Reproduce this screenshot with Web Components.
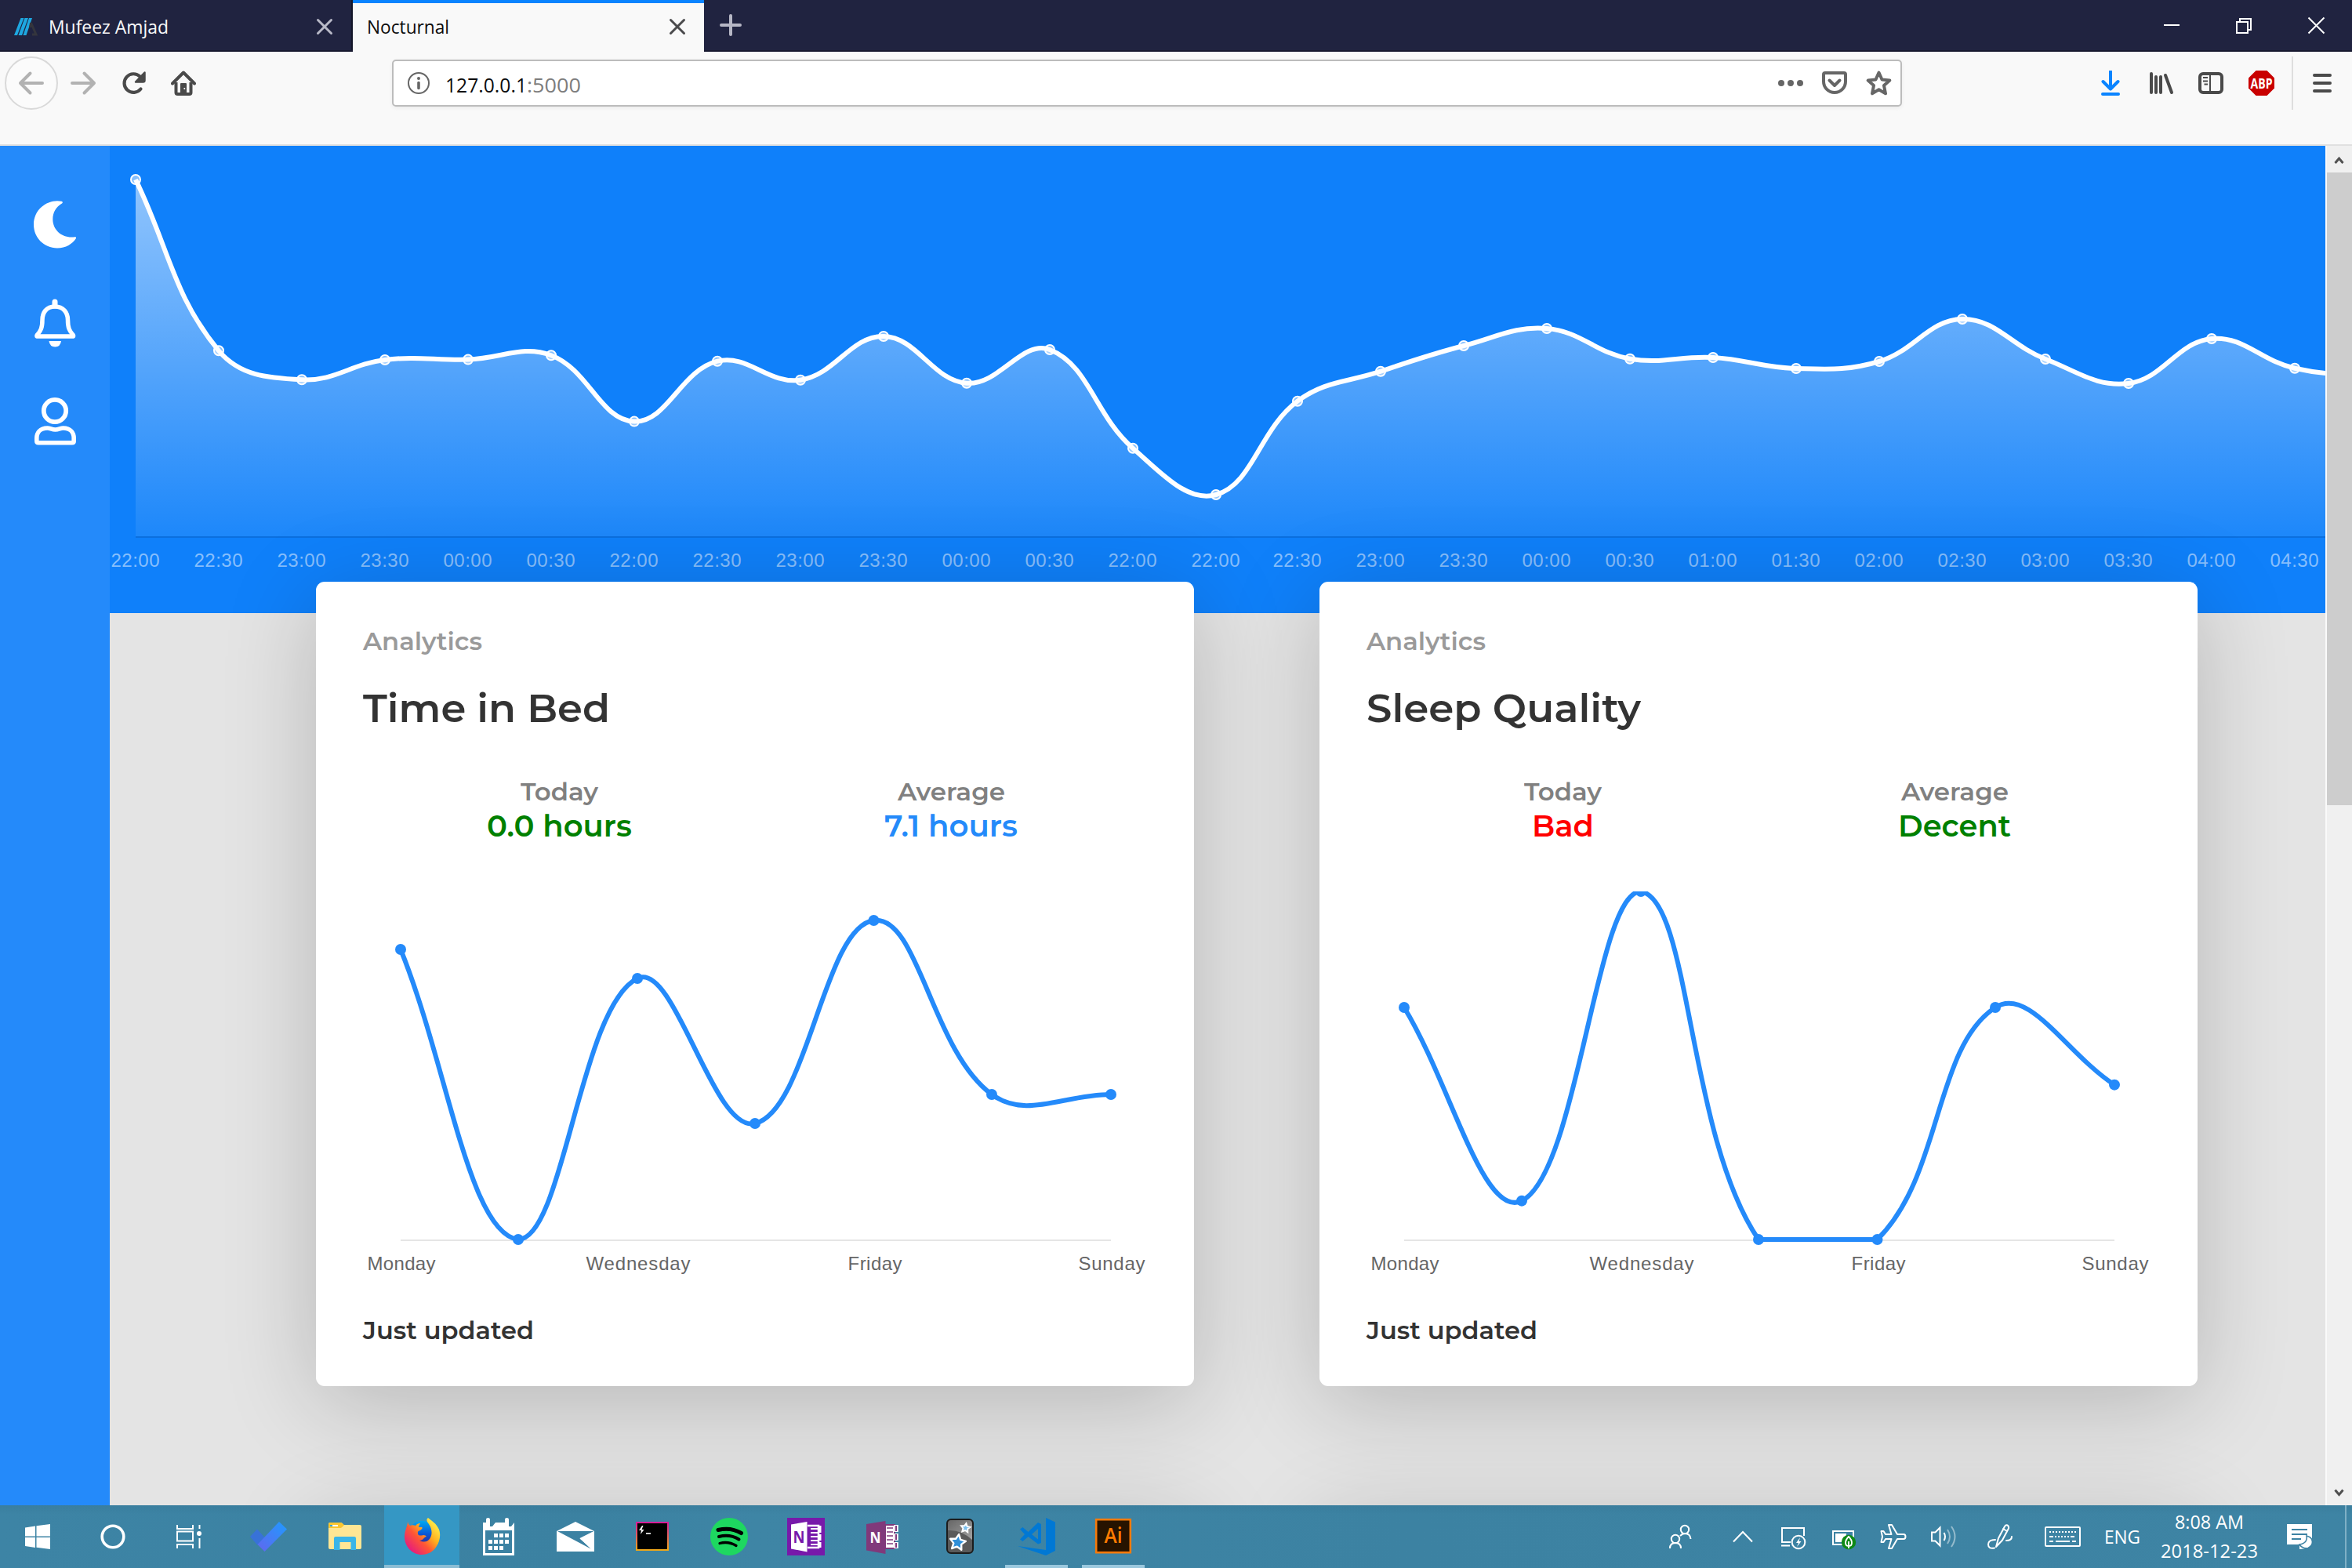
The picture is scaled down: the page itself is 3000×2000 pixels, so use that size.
<!DOCTYPE html>
<html lang="en">
<head>
<meta charset="utf-8">
<title>Nocturnal</title>
<style>
html,body{margin:0;padding:0;width:3000px;height:2000px;overflow:hidden}
body{display:flex;flex-direction:column;font-family:"Open Sans","Noto Sans",sans-serif;background:#e4e4e4}
</style>
</head>
<body>
<tab-strip></tab-strip>
<nav-bar></nav-bar>
<page-view>
  <side-nav slot="side"></side-nav>
  <wave-chart slot="hero"></wave-chart>
  <stat-card slot="cards" heading="Time in Bed" heading-w="315" today="0.0 hours" today-w="185" today-color="#008000" average="7.1 hours" average-w="170" average-color="#248afa" values="10,0,9,4,11,5,5" max="12"></stat-card>
  <stat-card slot="cards" heading="Sleep Quality" heading-w="350" today="Bad" today-w="79" today-color="#ff0000" average="Decent" average-w="144" average-color="#008000" values="6,1,9,0,0,6,4" max="9"></stat-card>
  <stat-card slot="cards" blank></stat-card>
  <stat-card slot="cards" blank></stat-card>
</page-view>
<task-bar></task-bar>

<script>
/* Inline SVG whose user units are window pixels. */
const ic = (x, y, w, h, body, ml = 0) =>
  `<svg width="${w}" height="${h}" viewBox="${x} ${y} ${w} ${h}" style="margin-left:${ml}px;flex:none;display:block" fill="none">${body}</svg>`;

/* Cubic spline through the points, control points capped to the plot area. */
function spline(pts, top, bottom, tension = 0.4) {
  const cap = v => Math.max(top, Math.min(bottom, v));
  const c = pts.map((p, i) => {
    const a = pts[i - 1] || p, b = pts[i + 1] || p;
    const d0 = Math.hypot(p[0] - a[0], p[1] - a[1]), d1 = Math.hypot(b[0] - p[0], b[1] - p[1]);
    const f0 = tension * d0 / (d0 + d1), f1 = tension * d1 / (d0 + d1);
    return [p[0] - f0 * (b[0] - a[0]), cap(p[1] - f0 * (b[1] - a[1])), p[0] + f1 * (b[0] - a[0]), cap(p[1] + f1 * (b[1] - a[1]))];
  });
  let d = `M${pts[0]}`;
  for (let i = 1; i < pts.length; i++) d += `C${c[i-1][2]} ${c[i-1][3]} ${c[i][0]} ${c[i][1]} ${pts[i]}`;
  return d;
}

class Base extends HTMLElement {
  connectedCallback() {
    if (this.shadowRoot) return;
    this.attachShadow({ mode: 'open' }).innerHTML = this.render();
  }
}

/* Text condensed or widened to a given width. */
customElements.define('fit-text', class extends HTMLElement {
  connectedCallback() {
    if (this.shadowRoot) return;
    const w = +this.getAttribute('w');
    this.attachShadow({ mode: 'open' }).innerHTML = `<style>:host{display:block;width:${w}px;white-space:nowrap;flex:none}span{display:inline-block;transform-origin:0 50%}</style><span><slot></slot></span>`;
    const s = this.shadowRoot.querySelector('span');
    const n = s.getBoundingClientRect().width;
    if (n) s.style.transform = `scaleX(${w / n})`;
  }
});

customElements.define('tab-strip', class extends Base {
  render() {
    const x = (cx, col) => ic(cx - 12, 22, 24, 24, `<path d="M${cx-8.5} 25.5l17 17M${cx+8.5} 25.5l-17 17" stroke="${col}" stroke-width="3" stroke-linecap="round"/>`);
    return `<style>
:host{display:flex;height:64px;background:#202340;border-bottom:2px solid #181a30;flex:none;font-size:24px;line-height:34px}
.tab{box-sizing:border-box;display:flex;align-items:flex-start;padding-top:22px;height:64px}
.tab fit-text{margin-top:-5px}
.one{width:450px;padding-left:18px;color:#f9f9fa;border-right:2px solid #14162a}
.two{width:448px;height:66px;padding:18px 0 0 18px;background:#f9f9f9;border-top:4px solid #0a84ff;color:#0c0c0d}
.grow{flex:1}
.pad{width:22px;flex:none}
.new{padding-top:16px;padding-left:18px}
.win{padding-top:20px;display:flex}
</style>
<div class="tab one">${ic(18,22,32,24,`<path d="M26.5 23h4L22 45h-4zM31.500 23h4.500L28 45h-4.500zM37 23h4L33.500 45h-4z" fill="#1ea7e0"/><path d="M39.500 29l6.500 15h-5M39.500 29l-1 6" stroke="#34353d" stroke-width="3"/>`)}<fit-text w="153" style="margin-left:12px">Mufeez Amjad</fit-text><div class="grow"></div>${x(414,'#b9bac8')}<div class="pad"></div></div>
<div class="tab two"><fit-text w="105">Nocturnal</fit-text><div class="grow"></div>${x(863.5,'#4a4a4c')}<div class="pad"></div></div>
<div class="new">${ic(916,16,32,32,`<path d="M932 20v24M920 32h24" stroke="#b6b7c5" stroke-width="4" stroke-linecap="round"/>`)}</div>
<div class="grow"></div>
<div class="win">${ic(2758,20,24,26,`<path d="M2760 32h20" stroke="#fff" stroke-width="2"/>`)}${ic(2850,20,24,26,`<path d="M2853 28h14v14h-14zM2857 28v-4h14v14h-4" stroke="#fff" stroke-width="2"/>`,68)}${ic(2942,20,26,26,`<path d="M2944.500 22.500l20 20M2964.500 22.500l-20 20" stroke="#fff" stroke-width="2"/>`,68)}</div><div style="width:32px"></div>`;
  }
});

customElements.define('nav-bar', class extends Base {
  render() {
    const g = '#4a4a4a', u = '#666';
    return `<style>
:host{display:block;box-sizing:border-box;height:120px;background:#f9f9f9;border-bottom:2px solid #e0e0e0;flex:none}
.row{display:flex;align-items:center;height:80px;padding-left:6px}
.url{box-sizing:border-box;width:1926px;height:60px;margin-left:250px;border:2px solid #bcbcbc;border-radius:5px;background:#fff;box-shadow:0 2px 5px rgba(0,0,0,.06);display:flex;align-items:center;padding-left:18px;font-size:26px;line-height:36px;color:#0c0c0d}
.url fit-text{padding-top:3px}
.port{color:#7d7d7d}.grow{flex:1}
.div{width:2px;height:68px;background:#dedede;margin-left:22px}
</style><div class="row">
${ic(6,72,68,68,`<circle cx="40" cy="106" r="33" fill="#fbfbfb" stroke="#d9d9d9" stroke-width="2"/><path d="M54 106H26M38.500 93.500L26 106l12.500 12.500" stroke="#b2b2b2" stroke-width="4" stroke-linecap="round" stroke-linejoin="round"/>`)}
${ic(90,90,34,32,`<path d="M92 106h28M107.500 93.500L120 106l-12.500 12.500" stroke="#b2b2b2" stroke-width="4" stroke-linecap="round" stroke-linejoin="round"/>`,16)}
${ic(154,90,34,32,`<path d="M179.500 113.500a11.800 11.800 0 1 1-1-16" stroke="${g}" stroke-width="4.200" stroke-linecap="round"/><path d="M184.500 92.500v10q0 2-2 2h-9.500z" fill="${g}" stroke="${g}" stroke-width="2.500" stroke-linejoin="round"/>`,30)}
${ic(218,90,32,32,`<path d="M220 106.500L234 92.500l14 14" stroke="${g}" stroke-width="4" stroke-linecap="round" stroke-linejoin="round"/><path d="M224.500 105v13q0 2 2 2h15q2 0 2-2v-13" stroke="${g}" stroke-width="4"/><path d="M230 107q0-1 1-1h6q1 0 1 1v13h-8z" fill="${g}"/><circle cx="235.300" cy="113" r="1" fill="#fff"/>`,30)}
<div class="url">${ic(520,92,28,28,`<circle cx="534" cy="106" r="13" stroke="${u}" stroke-width="2"/><circle cx="534" cy="100" r="2" fill="${u}"/><path d="M534 105.500v7" stroke="${u}" stroke-width="3.600" stroke-linecap="round"/>`)}
<fit-text w="104" style="margin-left:20px">127.0.0.1</fit-text><fit-text w="69" class="port">:5000</fit-text><div class="grow"></div>
${ic(2268,90,32,32,`<g fill="${u}"><circle cx="2272" cy="106" r="4"/><circle cx="2284" cy="106" r="4"/><circle cx="2296" cy="106" r="4"/></g>`)}
${ic(2324,90,32,32,`<path d="M2328 93h24q2 0 2 2v9a14 14 0 0 1-28 0v-9q0-2 2-2z" stroke="${u}" stroke-width="4"/><path d="M2333.500 102.500l6.500 6.500 6.500-6.500" stroke="${u}" stroke-width="4" stroke-linecap="round" stroke-linejoin="round"/>`,24)}
${ic(2380,89,33,34,`<path d="M2396.500 92.500l4 9 9.800 1-7.300 6.600 2 10.200-8.500-5-8.500 5 2-10.200-7.300-6.600 9.800-1z" stroke="${u}" stroke-width="4" stroke-linejoin="round"/>`,24)}<div style="width:11px"></div></div>
${ic(2676,90,32,32,`<path d="M2692 91v22M2682.500 104l9.500 9.500 9.500-9.500" stroke="#0a84ff" stroke-width="4" stroke-linecap="round" stroke-linejoin="round"/><path d="M2682 120h20" stroke="#0a84ff" stroke-width="4" stroke-linecap="round"/>`,250)}
${ic(2740,90,34,32,`<path d="M2744 94v24M2750 98v20M2756 98v20M2762 96l8 22" stroke="${g}" stroke-width="4" stroke-linecap="round"/>`,32)}
${ic(2804,90,32,32,`<rect x="2806" y="94" width="28" height="24" rx="4" stroke="${g}" stroke-width="4"/><path d="M2819 95v22" stroke="${g}" stroke-width="2"/><path d="M2810 99h6M2810 103.500h6M2811.500 107.500h4.500" stroke="${g}" stroke-width="2"/>`,30)}
${ic(2867,90,33,32,`<path d="M2876.500 90h14l9.500 9.500v13l-9.500 9.500h-14l-9.500-9.500v-13z" fill="#c90000"/><text x="2883.500" y="112.500" text-anchor="middle" font-family="Open Sans" font-weight="700" font-size="18" textLength="28" lengthAdjust="spacingAndGlyphs" fill="#fff">ABP</text>`,32)}
<div class="div"></div>
${ic(2948,90,28,32,`<path d="M2952 96h20M2952 106h20M2952 116h20" stroke="${g}" stroke-width="4" stroke-linecap="round"/>`,23)}
</div>`;
  }
});

customElements.define('page-view', class extends Base {
  render() {
    return `<style>
:host{display:flex;height:1734px;flex:none;overflow:hidden;background:#e4e4e4}
.main{width:2826px;height:1734px;overflow:hidden;flex:none}
.grid{display:grid;grid-template-columns:1120px 1120px;gap:160px;margin:-40px 0 0 263px}
.bar{width:34px;background:#f0f0f0;border-left:2px solid #fafafa;box-sizing:border-box;display:flex;flex-direction:column}
.thumb{height:807px;background:#cdcdcd}
.grow{flex:1}
</style><slot name="side"></slot><div class="main"><slot name="hero"></slot><div class="grid"><slot name="cards"></slot></div></div>
<div class="bar">${ic(2968,186,32,34,`<path d="M2978.500 208l5-6 5 6" stroke="#505050" stroke-width="3"/>`)}<div class="thumb"></div><div class="grow"></div>${ic(2968,1886,32,34,`<path d="M2978.500 1900.500l5 6 5-6" stroke="#505050" stroke-width="3"/>`)}</div>`;
  }
});

customElements.define('side-nav', class extends Base {
  render() {
    return `<style>:host{display:flex;flex-direction:column;align-items:center;width:140px;height:1734px;background:#248afa;flex:none;position:relative;z-index:1;box-sizing:border-box;padding-top:66px;gap:58px}</style>
${ic(36,252,68,68,`<path d="M78.500 256.800C62 253.500 43 266 43 286.500C43 303 56 316.400 73 316.400C84 316.400 92.500 311 96.800 304.200C97.500 303 96.800 302 95.500 302.200C80 304.500 67.300 294 67.300 279.500C67.300 271 71.500 264 79 259.500C80.300 258.700 80 257.100 78.500 256.800Z" fill="#fff"/>`)}
${ic(36,378,68,68,`<path d="M70 385v5" stroke="#fff" stroke-width="7" stroke-linecap="round"/><path d="M70 391C59 391 54 399 54 408C54 418 52 422 47.500 427Q46 429 48 429H92.500Q94.500 429 93 427C88.500 422 86.500 418 86.500 408C86.500 399 81 391 70 391Z" stroke="#fff" stroke-width="5.500" stroke-linejoin="round"/><path d="M62.500 435h15.500q-1 7.500-7.750 7.500t-7.750-7.500z" fill="#fff"/>`)}
${ic(36,504,68,68,`<circle cx="70" cy="524" r="14.200" stroke="#fff" stroke-width="5.800"/><path d="M60.500 546C51 546 46.800 552 46.800 559V562.500Q46.800 564.700 49 564.700H92Q94.200 564.700 94.200 562.500V559C94.200 552 90 546 80.500 546C77 546 75 548 70.500 548S64 546 60.500 546Z" stroke="#fff" stroke-width="5.600"/>`)}`;
  }
});

customElements.define('wave-chart', class extends Base {
  render() {
    const ys = [229,447.3,484.3,459,458.6,453.2,537.6,460.7,484.7,429,488.7,446,571.7,631,511.7,473.7,441,419,457.7,456,470,461,407,458,489,432,469.7,478,470];
    const labels = '22:00 22:30 23:00 23:30 00:00 00:30 22:00 22:30 23:00 23:30 00:00 00:30 22:00 22:00 22:30 23:00 23:30 00:00 00:30 01:00 01:30 02:00 02:30 03:00 03:30 04:00 04:30'.split(' ');
    const pts = ys.map((y, i) => [i < 14 ? 173 + i * 106 : 1655 + (i - 14) * 106, y]);
    const d = spline(pts, 186, 684);
    return `<style>:host{display:block;height:596px;background:#0f80fa}text{font:24px "Liberation Sans",sans-serif;fill:#fff;fill-opacity:.5;text-anchor:middle}</style>
${ic(140,186,2826,596,`<defs><linearGradient id="g" gradientUnits="userSpaceOnUse" x1="0" y1="229" x2="0" y2="684"><stop offset="0" stop-color="#fff" stop-opacity=".54"/><stop offset="1" stop-color="#fff" stop-opacity=".06"/></linearGradient></defs>
<path d="M173 685H3200" stroke="#0b6fde" stroke-width="2"/>
<path d="${d}V684H173Z" fill="url(#g)"/><path d="${d}" stroke="#fff" stroke-width="6"/>
${pts.map(p => `<circle cx="${p[0]}" cy="${p[1]}" r="6" fill="#fff" fill-opacity=".5" stroke="#fff" stroke-width="2"/>`).join('')}
${labels.map((t, i) => `<text x="${pts[i][0]-.5}" y="722.500" textLength="62">${t}</text>`).join('')}`)}`;
  }
});

customElements.define('stat-card', class extends Base {
  render() {
    const a = n => this.getAttribute(n);
    const css = `<style>
:host{display:block;box-sizing:border-box;width:1120px;height:1026px;background:#fff;border-radius:11px;box-shadow:0 20px 120px rgba(0,0,0,.2);padding:56px 60px 0;font-family:Montserrat,Inter,sans-serif;font-weight:600;position:relative}
.kicker{font-size:32px;line-height:40px;color:#9a9a9a}
.title{font-size:50px;line-height:60px;color:#333;margin-top:36px}
.stats{display:flex;margin-top:56px;margin-bottom:60px}
.stat{width:500px;display:flex;flex-direction:column;align-items:center}
.lab{font-size:32px;line-height:40px;color:#808080}
.val{font-size:38px;line-height:47px}
.foot{font-size:32px;line-height:40px;color:#333;margin-top:36px}
text{font:24px "Liberation Sans",sans-serif;fill:#666;text-anchor:middle}
</style>`;
    if (this.hasAttribute('blank')) return css;
    const max = +a('max'), xs = [511, 661, 813, 963, 1114.5, 1265, 1417];
    const pts = a('values').split(',').map((v, i) => [xs[i], 1580 - v / max * 444]);
    return `${css}<fit-text class="kicker" w="152">Analytics</fit-text>
<fit-text class="title" w="${a('heading-w')}">${a('heading')}</fit-text>
<div class="stats">
<div class="stat"><fit-text class="lab" w="99">Today</fit-text><fit-text class="val" w="${a('today-w')}" style="color:${a('today-color')}">${a('today')}</fit-text></div>
<div class="stat"><fit-text class="lab" w="137">Average</fit-text><fit-text class="val" w="${a('average-w')}" style="color:${a('average-color')}">${a('average')}</fit-text></div></div>
${ic(463,1136,1000,504,`<path d="M511 1581h906" stroke="#e5e5e5" stroke-width="2"/><path d="${spline(pts,1136,1580)}" stroke="#248afa" stroke-width="6"/>
${pts.map(p => `<circle cx="${p[0]}" cy="${p[1]}" r="7" fill="#248afa"/>`).join('')}
${[['Monday',87],['Wednesday',133],['Friday',69],['Sunday',85]].map((t, i) => `<text x="${512 + i * 302}" y="1619" textLength="${t[1]}">${t[0]}</text>`).join('')}`)}
<fit-text class="foot" w="218">Just updated</fit-text>`;
  }
});

customElements.define('task-bar', class extends Base {
  render() {
    const b = (cx, body, cls = '', w = 98) => `<div class="b ${cls}" style="width:${w}px">${ic(cx-24,1936,48,48,body)}</div>`;
    const t = (x0, w, ml, body) => ic(x0, 1940, w, 40, body, ml);
    const star = (cx, cy, r) => 'M' + [...Array(10)].map((_, i) => { const q = i % 2 ? r * .5 : r, th = i * Math.PI / 5 - Math.PI / 2 + .15; return (cx + q * Math.cos(th)).toFixed(1) + ' ' + (cy + q * Math.sin(th)).toFixed(1); }).join('L') + 'Z';
    const W = 'stroke="#fff" stroke-width="2"';
    return `<style>
:host{display:flex;height:80px;flex:none;background:linear-gradient(rgba(0,40,60,.06),transparent 12px),linear-gradient(90deg,#3d84a5,#3b81a1 25%,#3e85a5 32%,#3c82a2 60%,#3e84a4);color:#fff;font-size:23.500px}
.b{height:80px;box-sizing:border-box;display:flex;align-items:center;justify-content:center;flex:none}
.act{background:#3597c4;border-bottom:4px solid #8bbdd4;width:96px!important;margin:0 1px;padding-top:4px}
.run{background:linear-gradient(#9ac8de,#9ac8de) center bottom/80px 4px no-repeat}
.grow{flex:1}.tray{display:flex;align-items:center;height:80px}
.clock{width:140px;display:flex;flex-direction:column;align-items:center;line-height:37px;margin-left:18px}
.peek{width:2px;height:80px;background:#7fb0c6;margin-left:40px;margin-right:7px}
</style>
${b(48,`<path d="M32 1948.500l13-2v13H32zM46.500 1946.200L64 1944v15.500H46.500zM32 1961h13v13l-13-2zM46.500 1961H64v15l-17.500-2.300z" fill="#fff"/>`,'',96)}
${b(144,`<circle cx="144" cy="1960" r="13.800" stroke="#fff" stroke-width="3.600"/>`,'',96)}
${b(239,`<path d="M225 1945v5h20v-5M225 1953.500h20v12h-20zM225 1975v-5h20v5M253.500 1945v5M253.500 1962v13" ${W}/><circle cx="253" cy="1956" r="3" fill="#fff"/>`,'',96)}
<div style="width:5px"></div>
${b(342,`<defs><linearGradient id="c" x1="0" y1="1" x2="1" y2="0"><stop offset="0" stop-color="#6166ee"/><stop offset="1" stop-color="#1f9bff"/></linearGradient></defs><path d="M319 1960l9-9.500 10 11-9.500 9.500z" fill="#3872d8"/><path d="M328.500 1970L356 1941l10 9.500L337.500 1979z" fill="url(#c)"/>`)}
${b(440,`<path d="M419 1944q0-2 2-2h13q3 0 4 3h21q2 0 2 2v27q0 2-2 2h-38q-2 0-2-2z" fill="#ffe694"/><path d="M419 1944q0-2 2-2h14l4 3q-3 4-5 4h-15z" fill="#fbc62f"/><path d="M421 1945h10v2h-10z" fill="#fff"/><path d="M421 1945h3v2h-3z" fill="#36a8e0"/><path d="M426 1977v-15q0-2 2-2h24q2 0 2 2v15h-6.500v-10h-14v10z" fill="#3ab5e8"/>`)}
${b(538,`<defs><linearGradient id="f" x1=".9" y1=".1" x2=".1" y2=".9"><stop offset="0" stop-color="#fff44f"/><stop offset=".35" stop-color="#ffb01f"/><stop offset=".6" stop-color="#ff5634"/><stop offset="1" stop-color="#e31587"/></linearGradient><linearGradient id="h" x1="0" y1="0" x2="0" y2="1"><stop offset="0" stop-color="#00a8f0"/><stop offset=".5" stop-color="#0a56d6"/><stop offset="1" stop-color="#3b1b80"/></linearGradient></defs>
<circle cx="538" cy="1957" r="17" fill="url(#h)"/><path d="M520 1941q1 4 3 5c2-1 5-1 7 0q2-3 6-3q-2 3-2 5h4q2 1-2 4q-4 1-3 4c0 3 4 3 7 2q3 0 4 2c-3 0-4 5-9 5q8 4 13-2c4-6 3-13-1-19q-4-4-2-7l1-1c6 5 10 7 13 13c4 7 2 17-2 23c-4 7-11 11-19 11c-12 0-22-10-22-23c0-8 4-14 4-19z" fill="url(#f)"/>`,'act')}
${b(636,`<path d="M616 1942h4v-4q0-2 2.500-2t2.500 2v9h3l4-5h12v-4q0-2 2.500-2t2.500 2v9h3l4-5v42h-40z" fill="#fff"/><path d="M619 1952h34v29h-34z" fill="#3c82a3"/><path d="M630 1956h5v5h-5zM637 1956h5v5h-5zM644 1956h5v5h-5zM623 1964h5v5h-5zM630 1964h5v5h-5zM637 1964h5v5h-5zM644 1964h5v5h-5zM623 1972h5v5h-5zM630 1972h5v5h-5zM637 1972h5v5h-5z" fill="#fff"/>`)}
${b(734,`<path d="M710 1953l24-12 24 12v26h-48z" fill="#fff"/><path d="M711 1953h46.500l-18 9 14 13.500z" fill="#3c82a3"/><path d="M757 1953.500l-17.500 9 14 12z" fill="#fff"/>`)}
${b(832,`<defs><linearGradient id="p" x1="0" y1="0" x2="0" y2="1"><stop offset="0" stop-color="#d81e9a"/><stop offset="1" stop-color="#f0a818"/></linearGradient></defs><rect x="812" y="1942" width="40" height="35" fill="#000" stroke="url(#p)" stroke-width="2"/><path d="M819 1946l-4 6h3l-1 5 4.500-6h-3l2-5z" fill="#fff"/><path d="M824 1956h6" stroke="#ccc" stroke-width="2"/>`)}
${b(930,`<circle cx="930" cy="1960" r="24" fill="#1ed760"/><path d="M916 1951.500q16-4 29.500 4" stroke="#000" stroke-width="5" stroke-linecap="round"/><path d="M917 1960q14-3.500 25.500 3.500" stroke="#000" stroke-width="4" stroke-linecap="round"/><path d="M918 1968.500q11-3 21 3" stroke="#000" stroke-width="3.300" stroke-linecap="round"/>`)}
${b(1028,`<path d="M1004 1936h48v48h-48z" fill="#7719aa"/><path d="M1009 1944.500l20.500-3.500v38.500l-20.500-4z" fill="#fff"/><path d="M1030 1946h14v28h-14" stroke="#fff" stroke-width="2.500"/><path d="M1034 1950h9M1034 1955h9M1034 1960h9M1034 1965h9M1034 1970h9" stroke="#fff" stroke-width="2.200"/><path d="M1046 1946v9M1046 1957v8M1046 1967v7" stroke="#fff" stroke-width="3"/><text x="1019" y="1968" font-size="22" font-weight="700" text-anchor="middle" textLength="15" lengthAdjust="spacingAndGlyphs" fill="#7719aa">N</text>`)}
${b(1126,`<path d="M1129 1945h12v30h-12z" fill="#fff" stroke="#80397b" stroke-width="2"/><path d="M1131 1949h8M1131 1954h8M1131 1959h8M1131 1964h8M1131 1969h8" stroke="#80397b" stroke-width="1.600"/><path d="M1143 1945v9M1143 1956v9M1143 1967v8" stroke="#fff" stroke-width="5.500"/><path d="M1143 1946v7M1143 1957v7M1143 1968v6" stroke="#80397b" stroke-width="2"/><path d="M1105 1944l24.500-4v42l-24.500-4.500z" fill="#80397b"/><text x="1116.500" y="1967.500" font-size="20" font-weight="700" text-anchor="middle" textLength="14" lengthAdjust="spacingAndGlyphs" fill="#fff">N</text>`)}
${b(1224,`<defs><linearGradient id="k" x1="0" y1="0" x2="1" y2="1"><stop offset="0" stop-color="#666"/><stop offset="1" stop-color="#a2a2a2"/></linearGradient></defs><rect x="1208" y="1938" width="33" height="43" rx="5" fill="#5a5a5a" stroke="#1c1c1c" stroke-width="2"/><path d="M1209 1952q17-1 31 12v-20q0-5-5-5h-21q-5 0-5 5z" fill="url(#k)"/><path d="${star(1231.500,1949,6)}" fill="#7cc0ee" stroke="#fff" stroke-width="2"/><path d="${star(1221.500,1967.500,10.500)}" fill="#2f8fd8" stroke="#fff" stroke-width="2.400" stroke-linejoin="round"/>`)}
${b(1322,`<path d="M1334 1936l12 5.500v36.500l-12 6-36-12 36 5z" fill="#0078d4"/><path d="M1328 1944v24l-4 1.500-12.500-9.500-7 6-3.500-2.500 6-6.500-6-6.500 3.500-2.500 7 6L1324 1942zM1324 1950l-8 7 8 6.500z" fill="#0078d4" fill-rule="evenodd"/>`,'run')}
${b(1420,`<rect x="1398.200" y="1938.200" width="43.600" height="42" fill="#261300" stroke="#f77a0b" stroke-width="2.600"/><text x="1420" y="1968" font-size="27" font-weight="600" text-anchor="middle" textLength="23" lengthAdjust="spacingAndGlyphs" fill="#ff7c00">Ai</text>`,'run')}
<div class="grow"></div><div class="tray">
${t(2128,32,0,`<circle cx="2150" cy="1951" r="5.200" ${W}/><path d="M2144 1959q3-3 6-3q7 0 7.500 7" ${W}/><circle cx="2138" cy="1963" r="5.200" ${W}/><path d="M2131 1975q0-7 7-7t7 7" ${W}/>`)}
${t(2210,28,50,`<path d="M2212 1966.500l12-12.500 12 12.500" ${W}/>`)}
${t(2272,34,34,`<path d="M2285 1967h-11v-18h28v10M2273 1971.500h11" ${W}/><circle cx="2295" cy="1967" r="8.300" ${W}/><path d="M2297 1961l-5 7h3l-2 5 5.500-7h-3z" fill="#fff"/>`)}
${t(2337,34,31,`<path d="M2339 1953h26v17h-26z" ${W}/><path d="M2342 1956h14v11h-14z" fill="#fff"/><circle cx="2359" cy="1967" r="9.200" fill="#0e8a16"/><path d="M2359 1960q-4 4-4 8 0 4 4 4t4-4q0-4-4-8zM2359 1966v9" stroke="#fff" stroke-width="1.800"/>`)}
${t(2399,34,28,`<path d="M2410 1945h4l7 12h8q2.500 0 2.500 3t-2.500 3h-8l-7 12h-4l3.500-12h-7.500l-2.500 4h-3l1.500-7-1.500-7h3l2.500 4h7.500z" ${W} stroke-linejoin="round"/>`)}
${t(2463,36,30,`<path d="M2465 1954.500h4.500l6-6v23l-6-6h-4.500z" ${W}/><path d="M2480.500 1955q3 5 0 10" ${W}/><path d="M2485 1951q6 9 0 18M2490 1947q9 13 0 26" ${W} opacity=".45"/>`)}
${t(2535,36,36,`<path d="M2547 1973l3-11 8-15q1.500-2.500 3.500-1.500t1.500 4l-8 15zM2556 1950l5 3M2546 1964q-9 0-9 6 0 6 8 4.500M2560 1965q7 0 7-5" ${W} stroke-linecap="round" stroke-linejoin="round"/>`)}
${t(2608,48,37,`<rect x="2610" y="1948" width="44" height="24" rx="1" ${W}/><path d="M2615 1954h34" stroke="#fff" stroke-width="2" stroke-dasharray="2 2"/><path d="M2615 1960h34" stroke="#fff" stroke-width="2" stroke-dasharray="5 2 2 2 2 2 2 2 2 2 2 2 5 9"/><path d="M2615 1966h5M2623 1966h18M2644 1966h5" stroke="#fff" stroke-width="2"/>`)}
<fit-text w="46" style="margin-left:29px">ENG</fit-text>
<div class="clock"><fit-text w="88">8:08 AM</fit-text><fit-text w="124">2018-12-23</fit-text></div>
${t(2916,36,27,`<path d="M2918 1944h32v24q-4 8-16 8v-6h-16z" fill="#fff"/><path d="M2924 1951h20M2924 1957h20M2924 1963h12" stroke="#3c82a3" stroke-width="2"/><path d="M2943 1959q2 9-9 11 4 6 11 4.500 7-4 5-10-1-4-7-5.500z" fill="#fff" stroke="#3c82a3" stroke-width="1.600"/>`)}
<div class="peek"></div></div>`;
  }
});
</script>
</body>
</html>
